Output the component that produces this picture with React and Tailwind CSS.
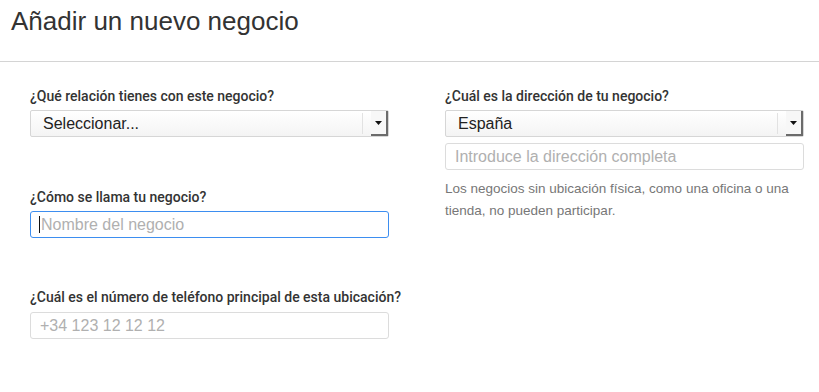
import React from 'react';

const font = { fontFamily: '"Liberation Sans", Arial, sans-serif' };

const Label = ({ children }) => (
    <label
        className="block whitespace-nowrap text-[14px] leading-[18px] font-medium text-[#333]"
        style={{ fontFamily: 'Roboto, "Liberation Sans", sans-serif' }}
    >
        {children}
    </label>
);

const SelectBox = ({ value }) => (
    <div className="flex h-[27px] items-stretch rounded-[2px] border border-[#d6d6d6] bg-gradient-to-b from-white to-[#f4f4f4]">
        <span className="flex-1 pl-[12px] text-[16px] leading-[25px] text-[#222]">{value}</span>
        <span className="my-[2px] w-px bg-[#e2e2e2]" />
        <span className="ml-[8px] flex w-[17px] items-center justify-center border-r-2 border-b-2 border-[#6b6b6b] bg-[#f7f7f7]">
            <svg width="7" height="4" viewBox="0 0 7 4">
                <path d="M0 0h7L3.5 4z" fill="#111" />
            </svg>
        </span>
    </div>
);

const TextInput = ({ placeholder, focused }) => (
    <div
        className={
            focused
                ? 'flex h-[27px] items-center rounded-[3px] border border-[#3d8ef0] pl-[8px]'
                : 'flex h-[27px] items-center rounded-[3px] border border-[#dcdcdc] pl-[9px]'
        }
    >
        {focused && <span className="mr-px h-[17px] w-px bg-[#111]" />}
        <span className="text-[16px] font-light text-[#b0b0b0]">{placeholder}</span>
    </div>
);

export default function App() {
    return (
        <div className="min-h-[392px] w-[819px] bg-white" style={font}>
            <div className="h-[62px] border-b border-[#d4d4d4] pl-[11px] pt-[3px]">
                <h1 className="text-[26px] font-light leading-[36px] text-[#333]">Añadir un nuevo negocio</h1>
            </div>
            <div className="grid grid-cols-[359px_359px] gap-x-[56px] pl-[30px] pt-[25px]">
                <div>
                    <Label>¿Qué relación tienes con este negocio?</Label>
                    <div className="mt-[5px]">
                        <SelectBox value="Seleccionar..." />
                    </div>
                    <div className="mt-[51px]">
                        <Label>¿Cómo se llama tu negocio?</Label>
                    </div>
                    <div className="mt-[5px]">
                        <TextInput placeholder="Nombre del negocio" focused />
                    </div>
                    <div className="mt-[50px]">
                        <Label>¿Cuál es el número de teléfono principal de esta ubicación?</Label>
                    </div>
                    <div className="mt-[6px]">
                        <TextInput placeholder="+34 123 12 12 12" />
                    </div>
                </div>
                <div>
                    <Label>¿Cuál es la dirección de tu negocio?</Label>
                    <div className="mt-[5px]">
                        <SelectBox value="España" />
                    </div>
                    <div className="mt-[6px]">
                        <TextInput placeholder="Introduce la dirección completa" />
                    </div>
                    <p className="mt-[8px] text-[13.5px] leading-[22px] text-[#777]">
                        Los negocios sin ubicación física, como una oficina o una tienda, no pueden participar.
                    </p>
                </div>
            </div>
        </div>
    );
}
